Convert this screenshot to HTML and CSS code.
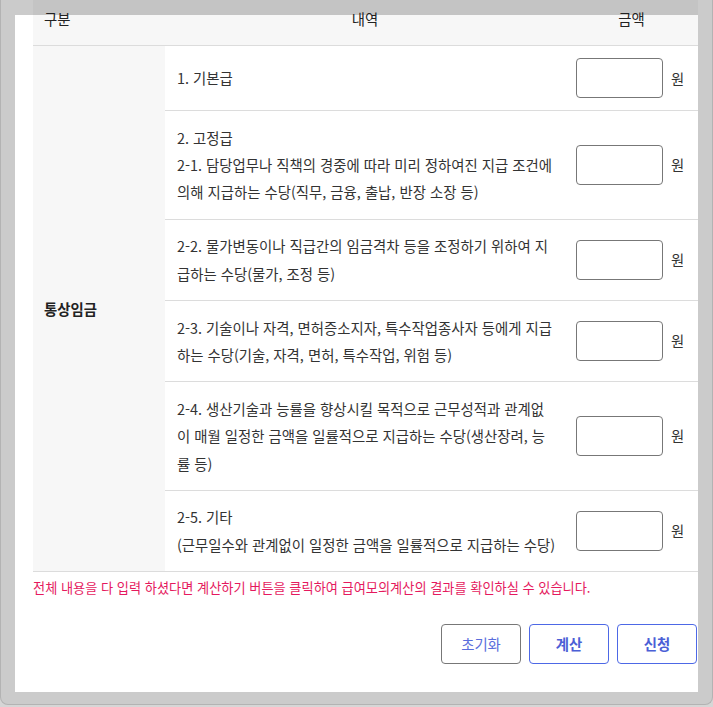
FILE: index.html
```html
<!DOCTYPE html>
<html lang="ko">
<head>
    <meta charset="UTF-8">
    <meta name="viewport" content="width=device-width, initial-scale=1.0">
    <title>급여모의계산</title>
    <link rel="stylesheet" href="styles.css">
</head>
<body>
    <div class="frame">
        <div class="panel">
            <table class="pay-table">
                <colgroup>
                    <col class="col-type">
                    <col class="col-desc">
                    <col class="col-amount">
                </colgroup>
                <thead>
                    <tr>
                        <th class="th-left">구분</th>
                        <th>내역</th>
                        <th>금액</th>
                    </tr>
                </thead>
                <tbody>
                    <tr>
                        <td class="type" rowspan="6">통상임금</td>
                        <td class="desc">1. 기본급</td>
                        <td class="amount"><input type="text"><span>원</span></td>
                    </tr>
                    <tr>
                        <td class="desc">2. 고정급<br>2-1. 담당업무나 직책의 경중에 따라 미리 정하여진 지급 조건에 의해 지급하는 수당(직무, 금융, 출납, 반장 소장 등)</td>
                        <td class="amount"><input type="text"><span>원</span></td>
                    </tr>
                    <tr>
                        <td class="desc">2-2. 물가변동이나 직급간의 임금격차 등을 조정하기 위하여 지급하는 수당(물가, 조정 등)</td>
                        <td class="amount"><input type="text"><span>원</span></td>
                    </tr>
                    <tr>
                        <td class="desc">2-3. 기술이나 자격, 면허증소지자, 특수작업종사자 등에게 지급하는 수당(기술, 자격, 면허, 특수작업, 위험 등)</td>
                        <td class="amount"><input type="text"><span>원</span></td>
                    </tr>
                    <tr>
                        <td class="desc">2-4. 생산기술과 능률을 향상시킬 목적으로 근무성적과 관계없이 매월 일정한 금액을 일률적으로 지급하는 수당(생산장려, 능률 등)</td>
                        <td class="amount"><input type="text"><span>원</span></td>
                    </tr>
                    <tr>
                        <td class="desc">2-5. 기타<br>(근무일수와 관계없이 일정한 금액을 일률적으로 지급하는 수당)</td>
                        <td class="amount"><input type="text"><span>원</span></td>
                    </tr>
                </tbody>
            </table>
            <p class="notice">전체 내용을 다 입력 하셨다면 계산하기 버튼을 클릭하여 급여모의계산의 결과를 확인하실 수 있습니다.</p>
            <div class="buttons">
                <button class="btn btn-reset">초기화</button>
                <button class="btn btn-main">계산</button>
                <button class="btn btn-main">신청</button>
            </div>
        </div>
    </div>
</body>
</html>
```

FILE: styles.css
```css
body {
    margin: 0;
    background-color: #d6d6d6;
    font-family: "Noto Sans CJK KR", "Noto Sans", sans-serif;
    color: #333;
}

.frame {
    width: 683px;
    height: 677px;
    padding: 15px 14px 12px 14px;
    background-color: #cbcbcb;
    border: 1px solid #b3b3b3;
    border-top: none;
    border-radius: 0 0 8px 8px;
}

.panel {
    height: 677px;
    padding-left: 18px;
    box-sizing: border-box;
    background-color: #fff;
    display: flex;
    flex-direction: column;
}

.pay-table {
    margin-top: -15px;
    width: 665px;
    border-collapse: collapse;
    table-layout: fixed;
    font-size: 14.4px;
}

.col-type {
    width: 132px;
}

.col-desc {
    width: 400px;
}

.col-amount {
    width: 133px;
}

th {
    height: 45px;
    padding: 8px 0 16px;
    box-sizing: border-box;
    line-height: 21px;
    font-weight: normal;
    color: #222;
    text-align: center;
    vertical-align: top;
    background: linear-gradient(to bottom, #c4c4c4 15px, #f7f7f7 15px);
    border-bottom: 1px solid #dcdcdc;
}

.th-left {
    text-align: left;
    padding-left: 11px;
}

td {
    border-bottom: 1px solid #dcdcdc;
    vertical-align: middle;
}

.type {
    padding-left: 11px;
    font-weight: bold;
    color: #222;
    background-color: #f7f7f7;
}

.desc {
    padding: 12.8px 8px 12.8px 12px;
    line-height: 27.33px;
    word-break: break-all;
}

.amount {
    padding: 12px 0 12px 11px;
}

.amount input {
    width: 87px;
    height: 40px;
    box-sizing: border-box;
    border: 1px solid #777;
    border-radius: 4px;
    vertical-align: middle;
}

.amount span {
    margin-left: 8px;
    vertical-align: middle;
}

.notice {
    margin: 6px 0 0;
    line-height: 20px;
    font-size: 13.2px;
    color: #e5195e;
}

.buttons {
    margin-top: 26px;
    display: flex;
    justify-content: flex-end;
    gap: 8px;
    padding-right: 1px;
}

.btn {
    width: 80px;
    height: 40px;
    background-color: #fff;
    border-radius: 4px;
    font-family: inherit;
    font-size: 14.4px;
    color: #4b5fd6;
    cursor: pointer;
}

.btn-reset {
    border: 1px solid #777;
    color: #5a6ddc;
}

.btn-main {
    border: 1px solid #4d68e6;
    font-weight: bold;
}
```
